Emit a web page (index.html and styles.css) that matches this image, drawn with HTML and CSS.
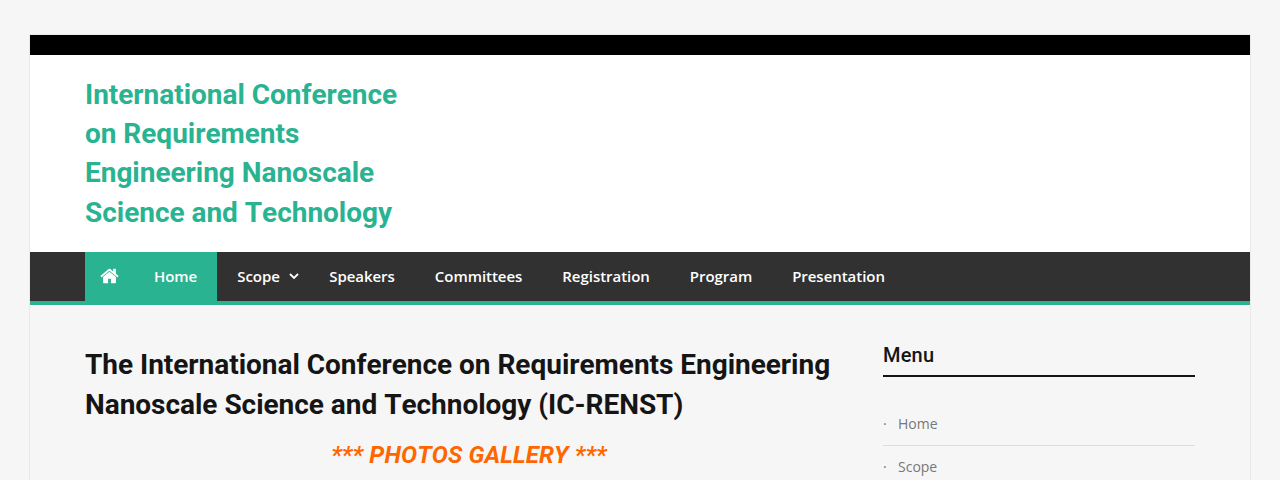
FILE: index.html
```html
<!DOCTYPE html>
<html lang="en">
<head>
    <meta charset="UTF-8">
    <meta name="viewport" content="width=device-width, initial-scale=1.0">
    <title>IC-RENST</title>
    <link rel="stylesheet" href="styles.css">
</head>
<body>
    <div id="page" class="site">
        <div class="top-bar"></div>
        <header class="site-header">
            <div class="container">
                <h1 class="site-title"><a href="#">International Conference on Requirements Engineering Nanoscale Science and Technology</a></h1>
            </div>
        </header>

        <nav class="main-nav">
            <div class="container">
                <ul class="menu">
                    <li class="home-icon current">
                        <a href="#" aria-label="Home page">
                            <svg width="19" height="20" viewBox="0 0 1664 1792">
                                <path d="M1408 992v480q0 26-19 45t-45 19h-384v-384h-256v384h-384q-26 0-45-19t-19-45v-480q0-1 .5-3t.5-3l575-474 575 474q1 2 1 6zm223-69l-62 74q-8 9-21 11h-3q-13 0-21-7l-692-577-692 577q-12 8-24 7-13-2-21-11l-62-74q-8-10-7-23.5t11-21.5l719-599q32-26 76-26t76 26l244 204v-195q0-14 9-23t23-9h192q14 0 23 9t9 23v408l219 182q10 8 11 21.5t-7 23.5z"/>
                            </svg>
                        </a>
                    </li>
                    <li class="current"><a href="#">Home</a></li>
                    <li class="has-children">
                        <a href="#">Scope
                            <svg width="10" height="7" viewBox="0 0 10 7">
                                <path d="M1 1l4 4 4-4"/>
                            </svg>
                        </a>
                    </li>
                    <li><a href="#">Speakers</a></li>
                    <li><a href="#">Committees</a></li>
                    <li><a href="#">Registration</a></li>
                    <li><a href="#">Program</a></li>
                    <li><a href="#">Presentation</a></li>
                </ul>
            </div>
        </nav>

        <div class="content container">
            <main class="primary">
                <h2 class="entry-title">The International Conference on Requirements Engineering Nanoscale Science and Technology (IC-RENST)</h2>
                <h3 class="gallery-title"><a href="#">*** PHOTOS GALLERY ***</a></h3>
            </main>
            <aside class="sidebar">
                <h2 class="widget-title">Menu</h2>
                <ul class="widget-menu">
                    <li><a href="#">Home</a></li>
                    <li><a href="#">Scope</a></li>
                </ul>
            </aside>
        </div>
    </div>
</body>
</html>
```
FILE: styles.css
```css
* {
    box-sizing: border-box;
}
body {
    margin: 0;
    background-color: #f6f6f6;
    color: #777;
    font-family: "Open Sans", sans-serif;
    font-size: 14px;
}
a {
    color: inherit;
    text-decoration: none;
}
ul {
    list-style: none;
    margin: 0;
    padding: 0;
}
h1, h2, h3 {
    margin: 0;
    font-family: Roboto, sans-serif;
    font-kerning: none;
}
.site {
    width: 1220px;
    height: 445px;
    margin: 35px auto 0;
    overflow: hidden;
    box-shadow: 0 0 1px rgba(0, 0, 0, 0.3);
}
.container {
    width: 1110px;
    margin: 0 auto;
}
.top-bar {
    height: 20px;
    background-color: #000;
}
.site-header {
    height: 197px;
    padding-top: 20px;
    background-color: #fff;
}
.site-title {
    width: 330px;
    color: #2ab391;
    font-size: 28px;
    font-weight: 700;
    letter-spacing: -0.03px;
    line-height: 39.2px;
}
.main-nav {
    height: 53px;
    background-color: #313131;
    border-bottom: 4px solid #2ab391;
}
.menu {
    display: flex;
}
.menu a {
    display: flex;
    align-items: center;
    height: 49px;
    padding: 0 20px 1px;
    color: #fff;
    font-size: 15px;
    font-weight: 600;
    letter-spacing: -0.04px;
}
.menu .home-icon a {
    padding: 0 15px 1px;
}
.menu .current {
    background-color: #2ab391;
}
.home-icon svg {
    fill: #fff;
}
.menu .has-children a {
    padding-right: 10px;
}
.has-children svg {
    margin-left: 9.3px;
    fill: none;
    stroke: #fff;
    stroke-width: 1.8;
}
.content {
    display: flex;
    justify-content: space-between;
    padding-top: 40px;
}
.primary {
    width: 768px;
}
.entry-title {
    color: #151515;
    font-size: 28px;
    font-weight: 700;
    letter-spacing: -0.03px;
    line-height: 40px;
}
.gallery-title {
    margin-top: 13px;
    color: #ff6600;
    font-size: 24px;
    font-style: italic;
    font-weight: 700;
    letter-spacing: 0.14px;
    line-height: 34px;
    text-align: center;
}
.sidebar {
    width: 312px;
}
.widget-title {
    height: 32px;
    margin-bottom: 26px;
    border-bottom: 2px solid #151515;
    color: #151515;
    font-size: 20px;
    font-weight: 500;
    letter-spacing: 0.2px;
    line-height: 20px;
}
.widget-menu li {
    height: 43px;
    border-bottom: 1px solid #ddd;
    line-height: 42px;
}
.widget-menu li::before {
    content: "·";
    display: inline-block;
    width: 15px;
}
```
